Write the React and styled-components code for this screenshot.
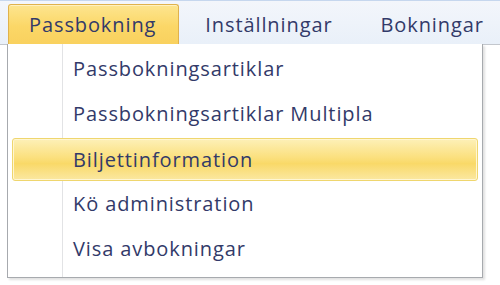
import React from 'react';
import styled, { createGlobalStyle } from 'styled-components';

const GlobalStyle = createGlobalStyle`
  html, body {
    margin: 0;
    padding: 0;
    background: #ffffff;
  }
  body {
    font-family: "Open Sans", "Noto Sans", sans-serif;
  }
`;

const Page = styled.div`
  width: 500px;
  height: 285px;
  overflow: hidden;
  position: relative;
  background: #ffffff;
`;

const MenuBar = styled.div`
  height: 43px;
  display: flex;
  align-items: flex-end;
  padding-left: 8px;
  background: linear-gradient(#f3f6fb, #e9f0f9);
  border-top: 1px solid #c6d7ee;
  border-bottom: 1px solid #c3c7cd;
`;

const TopItem = styled.div`
  height: 40px;
  box-sizing: border-box;
  display: flex;
  align-items: center;
  padding: 0 ${(p) => p.$right}px 0 ${(p) => p.$left}px;
  font-size: 20px;
  font-weight: 500;
  letter-spacing: 0.9px;
  color: #323a69;
  white-space: nowrap;
  ${(p) =>
    p.$active &&
    `
    background: linear-gradient(#fde58f, #fbd767 55%, #f9d15e);
    border: 1px solid #e0b24c;
    border-bottom: none;
    border-radius: 3px 3px 0 0;
    box-shadow: inset 0 1px 0 #fff1c0;
  `}
`;

const Dropdown = styled.div`
  position: absolute;
  left: 7px;
  top: 44px;
  width: 476px;
  box-sizing: border-box;
  padding: 2px 3px 6px 3px;
  background: #ffffff;
  border: 1px solid #a7aaae;
  border-top: none;
  box-shadow: 2px 2px 2px rgba(0, 0, 0, 0.12);
`;

const Gutter = styled.div`
  position: absolute;
  left: 54px;
  top: 0;
  bottom: 0;
  width: 1px;
  background: #e2e3e5;
  border-right: 1px solid #ffffff;
`;

const List = styled.div`
  position: relative;
  display: flex;
  flex-direction: column;
`;

const Item = styled.div`
  height: 45px;
  box-sizing: border-box;
  display: flex;
  align-items: center;
  padding-left: 60px;
  font-size: 20px;
  font-weight: 500;
  letter-spacing: 0.9px;
  color: #323a69;
  white-space: nowrap;
  border: 1px solid transparent;
  border-radius: 3px;
  margin: 0 1px;
  ${(p) =>
    p.$selected &&
    `
    height: 43px;
    margin: 2px 1px 0 1px;
    background: linear-gradient(#fdf0b8, #fbe07e 45%, #f9d968 60%, #fbe8a2);
    border-color: #efd66e;
    box-shadow: inset 0 0 0 1px #fff6d2;
  `}
`;

const items = [
  'Passbokningsartiklar',
  'Passbokningsartiklar Multipla',
  'Biljettinformation',
  'Kö administration',
  'Visa avbokningar',
];

export default function App() {
  return (
    <Page>
      <GlobalStyle />
      <MenuBar>
        <TopItem $active $left={20} $right={22}>Passbokning</TopItem>
        <TopItem $left={26} $right={24}>Inställningar</TopItem>
        <TopItem $left={24} $right={10}>Bokningar</TopItem>
      </MenuBar>
      <Dropdown>
        <Gutter />
        <List>
          {items.map((label, i) => (
            <Item key={label} $selected={i === 2}>
              {label}
            </Item>
          ))}
        </List>
      </Dropdown>
    </Page>
  );
}
